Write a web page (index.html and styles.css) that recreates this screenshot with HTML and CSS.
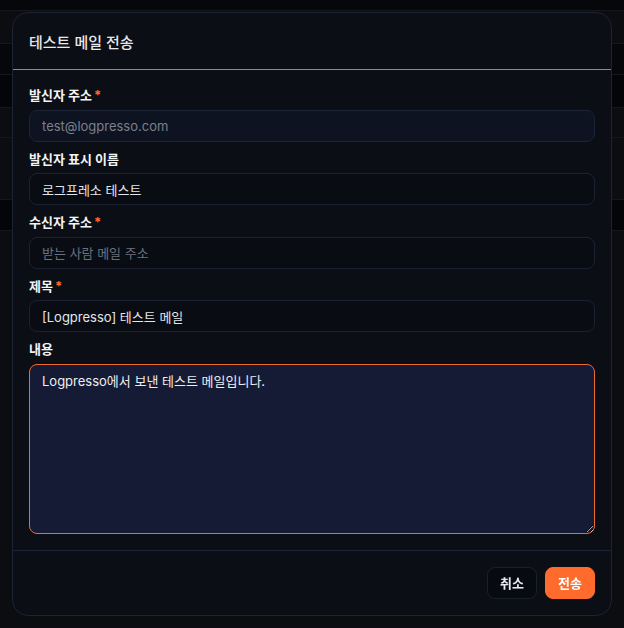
FILE: index.html
```html
<!DOCTYPE html>
<html lang="ko">
<head>
<meta charset="utf-8">
<title>테스트 메일 전송</title>
<link rel="stylesheet" href="styles.css">
</head>
<body>
<div class="page">
  <div class="bg-row bg-top"></div>
  <div class="bg-row bg-a h33"></div>
  <div class="bg-row bg-b h31"></div>
  <div class="bg-row bg-c h33"></div>
  <div class="bg-row bg-a h30"></div>
  <div class="bg-row bg-a h62"></div>
  <div class="bg-row bg-c h31"></div>
  <div class="bg-row bg-a h400"></div>
</div>
<div class="overlay">
  <div class="modal">
    <div class="modal-header">
      <h2 class="modal-title">테스트 메일 전송</h2>
    </div>
    <div class="modal-body">
      <div class="field">
        <label class="label">발신자 주소<span class="req">*</span></label>
        <input class="input input-disabled" type="text" value="test@logpresso.com" readonly>
      </div>
      <div class="field">
        <label class="label">발신자 표시 이름</label>
        <input class="input" type="text" value="로그프레소 테스트">
      </div>
      <div class="field">
        <label class="label">수신자 주소<span class="req">*</span></label>
        <input class="input" type="text" placeholder="받는 사람 메일 주소">
      </div>
      <div class="field">
        <label class="label">제목<span class="req">*</span></label>
        <input class="input" type="text" value="[Logpresso] 테스트 메일">
      </div>
      <div class="field">
        <label class="label">내용</label>
        <textarea class="textarea">Logpresso에서 보낸 테스트 메일입니다.</textarea>
      </div>
    </div>
    <div class="modal-footer">
      <button class="btn btn-cancel" type="button">취소</button>
      <button class="btn btn-primary" type="button">전송</button>
    </div>
  </div>
</div>
</body>
</html>
```
FILE: styles.css
```css
* { box-sizing: border-box; }
html, body {
  margin: 0;
  padding: 0;
  background: #0b0c0f;
  font-family: Inter, "Noto Sans CJK KR", sans-serif;
  overflow: hidden;
}
.page {
  display: flex;
  flex-direction: column;
}
.bg-row { border-bottom: 1px solid #15171c; }
.bg-top { height: 11px; background: #06070a; }
.bg-a { background: #0c0d10; }
.bg-b { background: #06070a; }
.bg-c { background: #040508; }
.h30 { height: 30px; }
.h31 { height: 31px; }
.h33 { height: 33px; }
.h62 { height: 62px; }
.h400 { height: 400px; border-bottom: 0; }

.overlay {
  position: fixed;
  inset: 0;
  padding: 12px;
  display: flex;
  align-items: flex-start;
}
.modal {
  flex: 1;
  background: #0b0e14;
  border: 1px solid #1e2334;
  border-radius: 16px;
  display: flex;
  flex-direction: column;
}
.modal-header {
  height: 57px;
  padding: 0 16px;
  display: flex;
  align-items: center;
  border-bottom: 1px solid #ee6a30;
}
.modal-title {
  margin: 0;
  font-size: 15px;
  font-weight: 500;
  color: #e6e8ed;
}
.modal-body {
  padding: 16px 16px 16px;
  display: flex;
  flex-direction: column;
  gap: 8px;
}
.field {
  display: flex;
  flex-direction: column;
}
.label {
  font-size: 13px;
  line-height: 19.5px;
  font-weight: 700;
  color: #f3f4f6;
  margin-bottom: 4px;
}
.req {
  color: #ff6b2c;
  margin-left: 2px;
}
.input {
  height: 32px;
  padding: 0 12px;
  border: 1px solid #1b2131;
  border-radius: 8px;
  background: #090c12;
  color: #e5e7eb;
  font-family: Inter, "Noto Sans CJK KR", sans-serif;
  font-size: 13px;
  outline: none;
}
.input::placeholder { color: #6b7180; }
.input-disabled {
  background: #0e1322;
  border-color: #1d2437;
  color: #7a808d;
}
.textarea {
  height: 170px;
  padding: 7px 12px;
  border: 1px solid #f06a2e;
  border-radius: 8px;
  background: #161b35;
  color: #eceef2;
  font-family: Inter, "Noto Sans CJK KR", sans-serif;
  font-size: 13px;
  line-height: 19.5px;
  outline: none;
  resize: vertical;
}
.modal-footer {
  border-top: 1px solid #1c2236;
  padding: 16px;
  display: flex;
  justify-content: flex-end;
  gap: 8px;
}
.btn {
  height: 32px;
  min-width: 50px;
  padding: 0 12px;
  border-radius: 8px;
  font-family: Inter, "Noto Sans CJK KR", sans-serif;
  font-size: 13px;
  font-weight: 600;
  cursor: pointer;
}
.btn-cancel {
  background: #070a10;
  border: 1px solid #1a1f2e;
  color: #e8eaee;
}
.btn-primary {
  background: #ff6b2c;
  border: 1px solid #ff6b2c;
  color: #ffffff;
}
```
